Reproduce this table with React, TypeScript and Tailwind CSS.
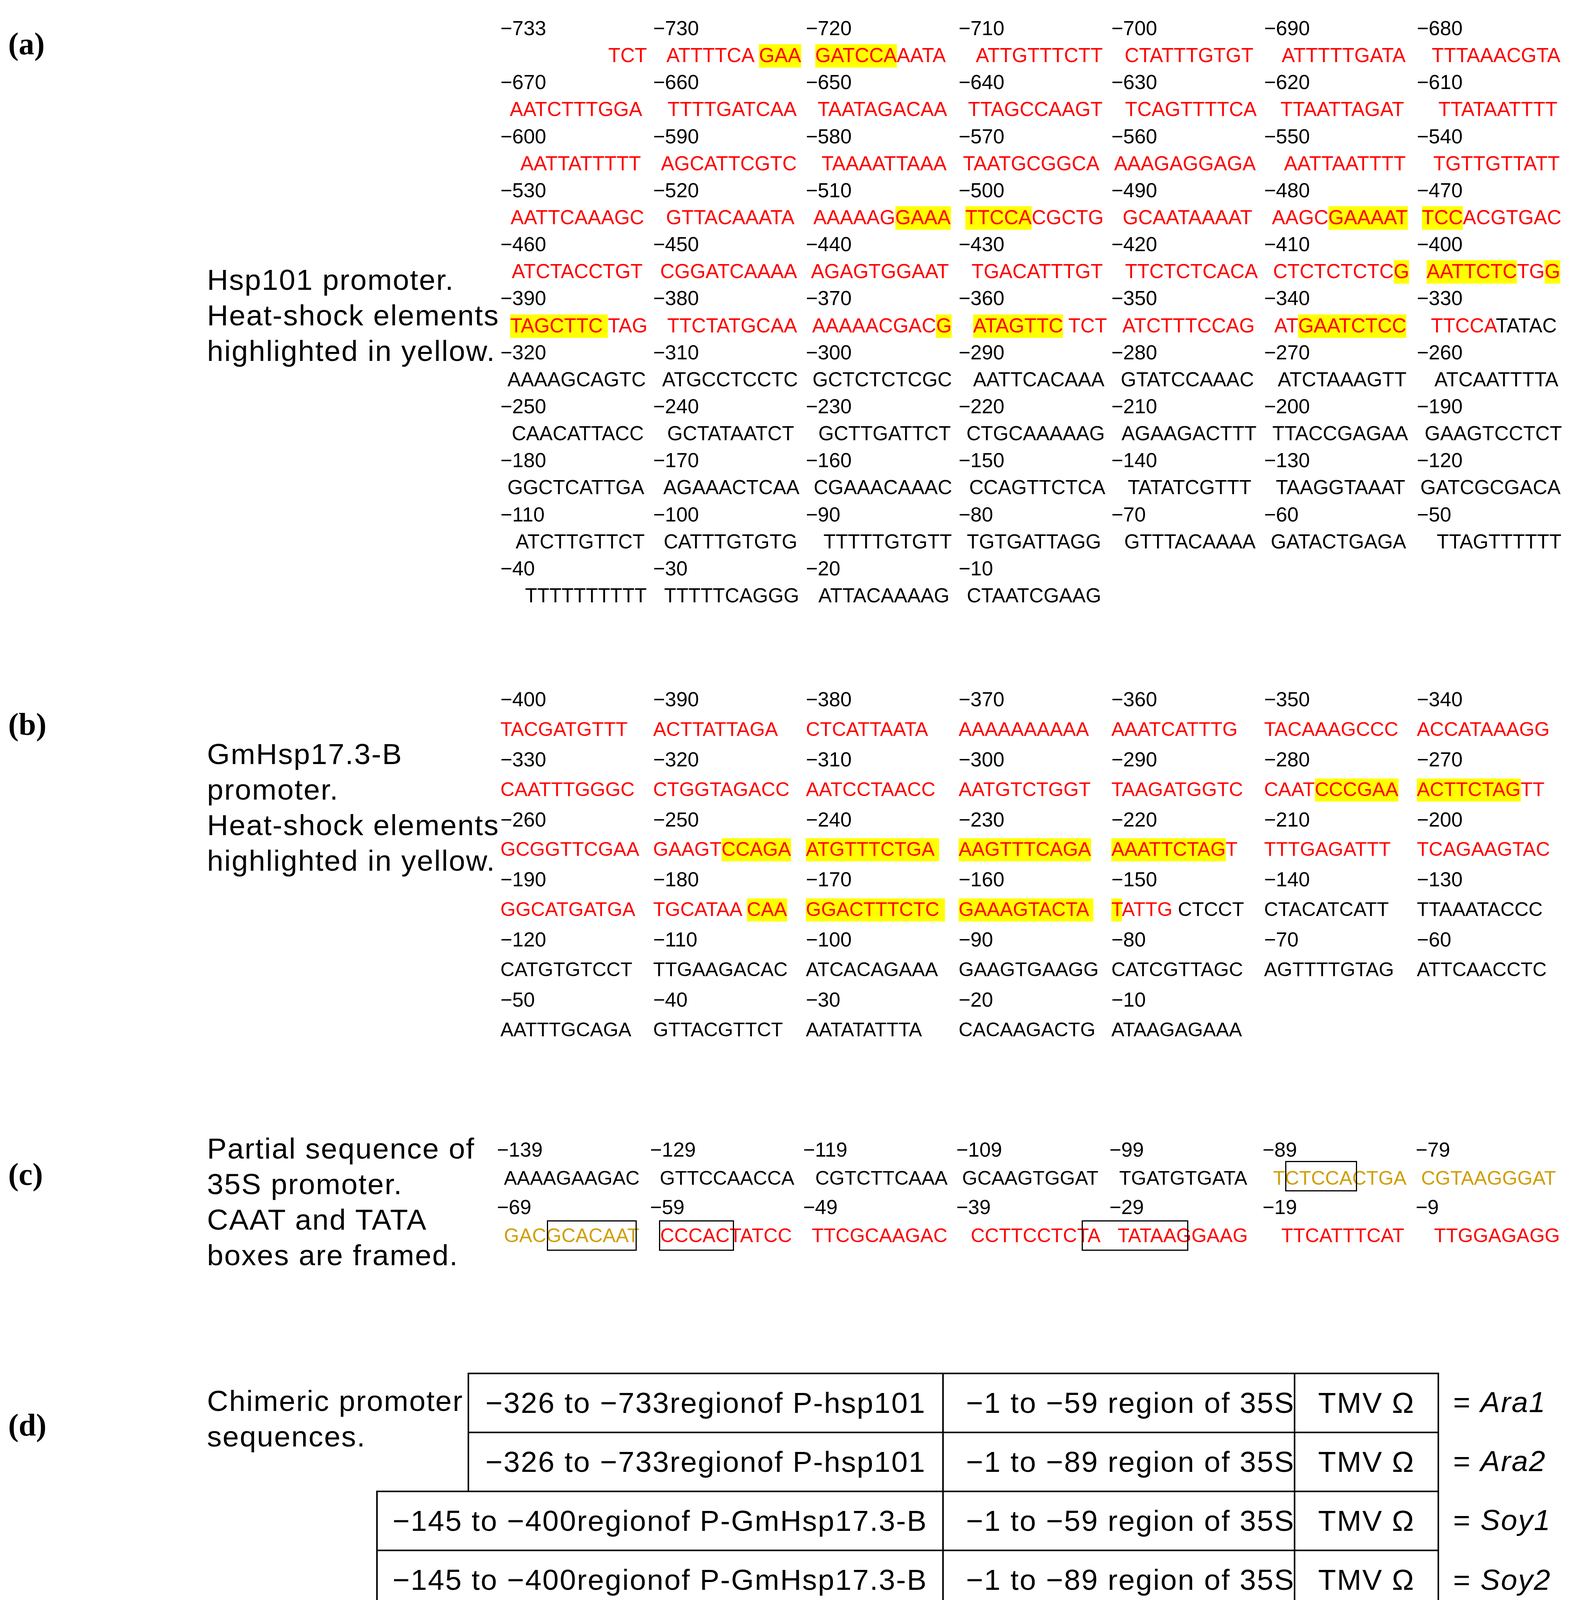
import React from "react";

type Kind = "r" | "k" | "y" | "o";
type Part = [string, Kind];
type Cell = { p: string; parts: Part[] };

const R = (s: string): Part => [s, "r"];
const K = (s: string): Part => [s, "k"];
const Y = (s: string): Part => [s, "y"];
const O = (s: string): Part => [s, "o"];
const c = (p: string, ...parts: Part[]): Cell => ({ p, parts });

const kindClass: Record<Kind, string> = {
  r: "text-[#ff0000]",
  k: "text-black",
  y: "text-[#ff0000] bg-[#ffff00] pb-[3px]",
  o: "text-[#d09e06]",
};

const aNums: string[][] = [
  ["−733", "−730", "−720", "−710", "−700", "−690", "−680"],
  ["−670", "−660", "−650", "−640", "−630", "−620", "−610"],
  ["−600", "−590", "−580", "−570", "−560", "−550", "−540"],
  ["−530", "−520", "−510", "−500", "−490", "−480", "−470"],
  ["−460", "−450", "−440", "−430", "−420", "−410", "−400"],
  ["−390", "−380", "−370", "−360", "−350", "−340", "−330"],
  ["−320", "−310", "−300", "−290", "−280", "−270", "−260"],
  ["−250", "−240", "−230", "−220", "−210", "−200", "−190"],
  ["−180", "−170", "−160", "−150", "−140", "−130", "−120"],
  ["−110", "−100", "−90", "−80", "−70", "−60", "−50"],
  ["−40", "−30", "−20", "−10"],
];

const aSeq: Cell[][] = [
  [
    c("pl-[276px]", R("TCT")),
    c("pl-[34px]", R("ATTTTCA "), Y("GAA")),
    c("pl-[24px]", Y("GATCCA"), R("AATA")),
    c("pl-[44px]", R("ATTGTTTCTT")),
    c("pl-[34px]", R("CTATTTGTGT")),
    c("pl-[45px]", R("ATTTTTGATA")),
    c("pl-[38px]", R("TTTAAACGTA")),
  ],
  [
    c("pl-[24px]", R("AATCTTTGGA")),
    c("pl-[37px]", R("TTTTGATCAA")),
    c("pl-[30px]", R("TAATAGACAA")),
    c("pl-[24px]", R("TTAGCCAAGT")),
    c("pl-[35px]", R("TCAGTTTTCA")),
    c("pl-[42px]", R("TTAATTAGAT")),
    c("pl-[55px]", R("TTATAATTTT")),
  ],
  [
    c("pl-[51px]", R("AATTATTTTT")),
    c("pl-[20px]", R("AGCATTCGTC")),
    c("pl-[40px]", R("TAAAATTAAA")),
    c("pl-[11px]", R("TAATGCGGCA")),
    c("pl-[7px]", R("AAAGAGGAGA")),
    c("pl-[51px]", R("AATTAATTTT")),
    c("pl-[42px]", R("TGTTGTTATT")),
  ],
  [
    c("pl-[26px]", R("AATTCAAAGC")),
    c("pl-[33px]", R("GTTACAAATA")),
    c("pl-[19px]", R("AAAAAG"), Y("GAAA")),
    c("pl-[17px]", Y("TTCCA"), R("CGCTG")),
    c("pl-[29px]", R("GCAATAAAAT")),
    c("pl-[20px]", R("AAGC"), Y("GAAAAT")),
    c("pl-[13px]", Y("TCC"), R("ACGTGAC")),
  ],
  [
    c("pl-[29px]", R("ATCTACCTGT")),
    c("pl-[18px]", R("CGGATCAAAA")),
    c("pl-[13px]", R("AGAGTGGAAT")),
    c("pl-[33px]", R("TGACATTTGT")),
    c("pl-[35px]", R("TTCTCTCACA")),
    c("pl-[23px]", R("CTCTCTCTC"), Y("G")),
    c("pl-[25px]", Y("AATTCTC"), R("TG"), Y("G")),
  ],
  [
    c("pl-[25px]", Y("TAGCTTC "), R("TAG")),
    c("pl-[36px]", R("TTCTATGCAA")),
    c("pl-[16px]", R("AAAAACGAC"), Y("G")),
    c("pl-[37px]", Y("ATAGTTC"), R(" TCT")),
    c("pl-[28px]", R("ATCTTTCCAG")),
    c("pl-[26px]", R("AT"), Y("GAATCTCC")),
    c("pl-[36px]", R("TTCCA"), K("TATAC")),
  ],
  [
    c("pl-[18px]", K("AAAAGCAGTC")),
    c("pl-[23px]", K("ATGCCTCCTC")),
    c("pl-[17px]", K("GCTCTCTCGC")),
    c("pl-[37px]", K("AATTCACAAA")),
    c("pl-[24px]", K("GTATCCAAAC")),
    c("pl-[35px]", K("ATCTAAAGTT")),
    c("pl-[45px]", K("ATCAATTTTA")),
  ],
  [
    c("pl-[29px]", K("CAACATTACC")),
    c("pl-[36px]", K("GCTATAATCT")),
    c("pl-[32px]", K("GCTTGATTCT")),
    c("pl-[20px]", K("CTGCAAAAAG")),
    c("pl-[26px]", K("AGAAGACTTT")),
    c("pl-[21px]", K("TTACCGAGAA")),
    c("pl-[20px]", K("GAAGTCCTCT")),
  ],
  [
    c("pl-[18px]", K("GGCTCATTGA")),
    c("pl-[26px]", K("AGAAACTCAA")),
    c("pl-[20px]", K("CGAAACAAAC")),
    c("pl-[27px]", K("CCAGTTCTCA")),
    c("pl-[42px]", K("TATATCGTTT")),
    c("pl-[30px]", K("TAAGGTAAAT")),
    c("pl-[9px]", K("GATCGCGACA")),
  ],
  [
    c("pl-[39px]", K("ATCTTGTTCT")),
    c("pl-[27px]", K("CATTTGTGTG")),
    c("pl-[45px]", K("TTTTTGTGTT")),
    c("pl-[21px]", K("TGTGATTAGG")),
    c("pl-[33px]", K("GTTTACAAAA")),
    c("pl-[17px]", K("GATACTGAGA")),
    c("pl-[51px]", K("TTAGTTTTTT")),
  ],
  [
    c("pl-[63px]", K("TTTTTTTTTT")),
    c("pl-[28px]", K("TTTTTCAGGG")),
    c("pl-[32px]", K("ATTACAAAAG")),
    c("pl-[21px]", K("CTAATCGAAG")),
  ],
];

const bNums: string[][] = [
  ["−400", "−390", "−380", "−370", "−360", "−350", "−340"],
  ["−330", "−320", "−310", "−300", "−290", "−280", "−270"],
  ["−260", "−250", "−240", "−230", "−220", "−210", "−200"],
  ["−190", "−180", "−170", "−160", "−150", "−140", "−130"],
  ["−120", "−110", "−100", "−90", "−80", "−70", "−60"],
  ["−50", "−40", "−30", "−20", "−10"],
];

const bSeq: Cell[][] = [
  [
    c("", R("TACGATGTTT")),
    c("", R("ACTTATTAGA")),
    c("", R("CTCATTAATA")),
    c("", R("AAAAAAAAAA")),
    c("", R("AAATCATTTG")),
    c("", R("TACAAAGCCC")),
    c("", R("ACCATAAAGG")),
  ],
  [
    c("", R("CAATTTGGGC")),
    c("", R("CTGGTAGACC")),
    c("", R("AATCCTAACC")),
    c("", R("AATGTCTGGT")),
    c("", R("TAAGATGGTC")),
    c("", R("CAAT"), Y("CCCGAA")),
    c("", Y("ACTTCTAG"), R("TT")),
  ],
  [
    c("", R("GCGGTTCGAA")),
    c("", R("GAAGT"), Y("CCAGA")),
    c("", Y("ATGTTTCTGA ")),
    c("", Y("AAGTTTCAGA")),
    c("", Y("AAATTCTAG"), R("T")),
    c("", R("TTTGAGATTT")),
    c("", R("TCAGAAGTAC")),
  ],
  [
    c("", R("GGCATGATGA")),
    c("", R("TGCATAA "), Y("CAA")),
    c("", Y("GGACTTTCTC ")),
    c("", Y("GAAAGTACTA ")),
    c("", Y("T"), R("ATTG"), K(" CTCCT")),
    c("", K("CTACATCATT")),
    c("", K("TTAAATACCC")),
  ],
  [
    c("", K("CATGTGTCCT")),
    c("", K("TTGAAGACAC")),
    c("", K("ATCACAGAAA")),
    c("", K("GAAGTGAAGG")),
    c("", K("CATCGTTAGC")),
    c("", K("AGTTTTGTAG")),
    c("", K("ATTCAACCTC")),
  ],
  [
    c("", K("AATTTGCAGA")),
    c("", K("GTTACGTTCT")),
    c("", K("AATATATTTA")),
    c("", K("CACAAGACTG")),
    c("", K("ATAAGAGAAA")),
  ],
];

const cNums: string[][] = [
  ["−139", "−129", "−119", "−109", "−99", "−89", "−79"],
  ["−69", "−59", "−49", "−39", "−29", "−19", "−9"],
];

const cSeq: Cell[][] = [
  [
    c("pl-[18px]", K("AAAAGAAGAC")),
    c("pl-[25px]", K("GTTCCAACCA")),
    c("pl-[31px]", K("CGTCTTCAAA")),
    c("pl-[15px]", K("GCAAGTGGAT")),
    c("pl-[25px]", K("TGATGTGATA")),
    c("pl-[27px]", O("TCTCCACTGA")),
    c("pl-[14px]", O("CGTAAGGGAT")),
  ],
  [
    c("pl-[18px]", O("GACGCACAAT")),
    c("pl-[26px]", R("CCCACTATCC")),
    c("pl-[22px]", R("TTCGCAAGAC")),
    c("pl-[37px]", R("CCTTCCTCTA")),
    c("pl-[21px]", R("TATAAGGAAG")),
    c("pl-[48px]", R("TTCATTTCAT")),
    c("pl-[47px]", R("TTGGAGAGG")),
  ],
];

function SeqLine({ cells, line, col }: { cells: Cell[]; line: string; col: string }) {
  return (
    <div className={`flex whitespace-pre ${line}`}>
      {cells.map((cell, i) => (
        <div key={i} className={`${col} shrink-0 ${cell.p}`}>
          {cell.parts.map(([t, k], j) => (
            <span key={j} className={kindClass[k]}>
              {t}
            </span>
          ))}
        </div>
      ))}
    </div>
  );
}

function NumLine({ nums, line, col }: { nums: string[]; line: string; col: string }) {
  return (
    <div className={`flex whitespace-nowrap text-[52px] text-black ${line}`}>
      {nums.map((n, i) => (
        <div key={i} className={`${col} shrink-0`}>
          {n}
        </div>
      ))}
    </div>
  );
}

function Label({ text, mt }: { text: string; mt: string }) {
  return (
    <div className={`w-[530px] shrink-0 pl-[21px] ${mt}`}>
      <div className="font-['Liberation_Serif','Times_New_Roman',serif] text-[80px] font-bold leading-[92px] text-black">
        {text}
      </div>
    </div>
  );
}

function Desc({ lines, mt, w }: { lines: string[]; mt: string; w: string }) {
  return (
    <div className={`${w} ${mt} shrink-0 whitespace-nowrap text-[75px] leading-[91px] tracking-[2.3px] text-black`}>
      {lines.map((l, i) => (
        <div key={i}>{l}</div>
      ))}
    </div>
  );
}

const tableRows = [
  { first: "−326 to −733regionof P-hsp101", w1: "w-[1215px]", shift: "", second: "−1 to −59 region of 35S", name: "Ara1", last: false },
  { first: "−326 to −733regionof P-hsp101", w1: "w-[1215px]", shift: "", second: "−1 to −89 region of 35S", name: "Ara2", last: false },
  { first: "−145 to −400regionof P-GmHsp17.3-B", w1: "w-[1449px]", shift: "-ml-[234px]", second: "−1 to −59 region of 35S", name: "Soy1", last: false },
  { first: "−145 to −400regionof P-GmHsp17.3-B", w1: "w-[1449px]", shift: "-ml-[234px]", second: "−1 to −89 region of 35S", name: "Soy2", last: true },
];

export default function App() {
  return (
    <div className="w-[4037px] h-[4151px] overflow-hidden bg-white font-['Liberation_Sans','Arial',sans-serif] text-black">
      {/* (a) */}
      <section className="flex h-[1700px]">
        <Label text="(a)" mt="mt-[66px]" />
        <Desc
          w="w-[751px]"
          mt="mt-[671px]"
          lines={["Hsp101 promoter.", "Heat-shock elements", "highlighted in yellow."]}
        />
        <div className="mt-[38px] shrink-0">
          {aNums.map((nums, i) => (
            <React.Fragment key={i}>
              <NumLine nums={nums} line="h-[69.15px] leading-[69.15px]" col="w-[391px]" />
              <div className="text-[51px]">
                <SeqLine cells={aSeq[i]} line="h-[69.15px] leading-[69.15px]" col="w-[391px]" />
              </div>
            </React.Fragment>
          ))}
        </div>
      </section>

      {/* (b) */}
      <section className="flex h-[1100px]">
        <Label text="(b)" mt="mt-[108px]" />
        <Desc
          w="w-[751px]"
          mt="mt-[185px]"
          lines={["GmHsp17.3-B", "promoter.", "Heat-shock elements", "highlighted in yellow."]}
        />
        <div className="mt-[52px] shrink-0">
          {bNums.map((nums, i) => (
            <React.Fragment key={i}>
              <NumLine nums={nums} line="h-[76.9px] leading-[76.9px]" col="w-[391px]" />
              <div className="text-[50px]">
                <SeqLine cells={bSeq[i]} line="h-[76.9px] leading-[76.9px]" col="w-[391px]" />
              </div>
            </React.Fragment>
          ))}
        </div>
      </section>

      {/* (c) */}
      <section className="flex h-[600px]">
        <Label text="(c)" mt="mt-[160px]" />
        <Desc
          w="w-[742px]"
          mt="mt-[95px]"
          lines={["Partial sequence of", "35S promoter.", "CAAT and TATA", "boxes are framed."]}
        />
        <div className="relative mt-[107px] shrink-0">
          {cNums.map((nums, i) => (
            <React.Fragment key={i}>
              <NumLine nums={nums} line="h-[73.3px] leading-[73.3px]" col="w-[392px]" />
              <div className="text-[50px]">
                <SeqLine cells={cSeq[i]} line="h-[73.3px] leading-[73.3px]" col="w-[392px]" />
              </div>
            </React.Fragment>
          ))}
          <div className="absolute left-[2018px] top-[65px] h-[78px] w-[184px] border-[3px] border-black" />
          <div className="absolute left-[128px] top-[217px] h-[78px] w-[230px] border-[3px] border-black" />
          <div className="absolute left-[415px] top-[217px] h-[78px] w-[192px] border-[3px] border-black" />
          <div className="absolute left-[1497px] top-[217px] h-[78px] w-[273px] border-[3px] border-black" />
        </div>
      </section>

      {/* (d) */}
      <section className="flex h-[751px]">
        <Label text="(d)" mt="mt-[202px]" />
        <Desc w="w-[667px]" mt="mt-[141px]" lines={["Chimeric promoter", "sequences."]} />
        <div className="mt-[114px] flex shrink-0 flex-col whitespace-nowrap text-[75px] tracking-[2.5px]">
          {tableRows.map((r, i) => (
            <div key={i} className={`flex ${r.last ? "h-[155px]" : "h-[151px]"} ${r.shift}`}>
              <div
                className={`${r.w1} flex shrink-0 items-center justify-center border-l-[4px] border-t-[4px] border-black ${r.last ? "border-b-[4px]" : ""}`}
              >
                {r.first}
              </div>
              <div
                className={`flex w-[900px] shrink-0 items-center border-l-[4px] border-t-[4px] border-black pl-[57px] ${r.last ? "border-b-[4px]" : ""}`}
              >
                {r.second}
              </div>
              <div
                className={`flex w-[372px] shrink-0 items-center justify-center border-l-[4px] border-r-[4px] border-t-[4px] border-black ${r.last ? "border-b-[4px]" : ""}`}
              >
                TMV Ω
              </div>
              <div className="flex shrink-0 items-center pl-[36px]">
                <span>=&nbsp;</span>
                <span className="italic">{r.name}</span>
              </div>
            </div>
          ))}
        </div>
      </section>
    </div>
  );
}
